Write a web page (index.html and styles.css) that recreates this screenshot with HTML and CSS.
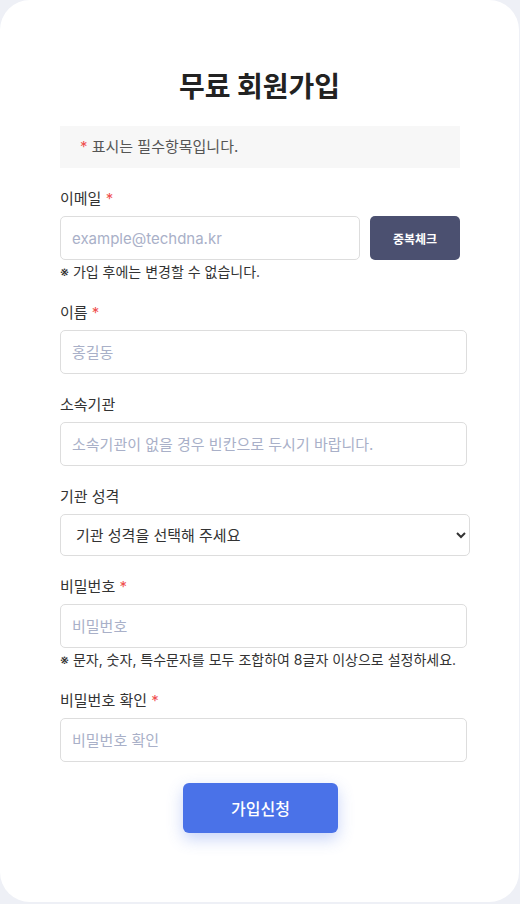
FILE: index.html
```html
<!DOCTYPE html>
<html lang="ko">
<head>
<meta charset="utf-8">
<title>무료 회원가입</title>
<link rel="stylesheet" href="styles.css">
</head>
<body>
<div class="card">
  <h1 class="title">무료 회원가입</h1>
  <div class="notice"><span class="req">*</span> 표시는 필수항목입니다.</div>

  <div class="field">
    <label class="label">이메일 <span class="req">*</span></label>
    <div class="row">
      <input class="input input-email" type="text" placeholder="example@techdna.kr">
      <button class="btn-check" type="button">중복체크</button>
    </div>
    <p class="hint">※ 가입 후에는 변경할 수 없습니다.</p>
  </div>

  <div class="field">
    <label class="label">이름 <span class="req">*</span></label>
    <input class="input" type="text" placeholder="홍길동">
  </div>

  <div class="field">
    <label class="label">소속기관</label>
    <input class="input" type="text" placeholder="소속기관이 없을 경우 빈칸으로 두시기 바랍니다.">
  </div>

  <div class="field">
    <label class="label">기관 성격</label>
    <select class="select">
      <option>기관 성격을 선택해 주세요</option>
    </select>
  </div>

  <div class="field">
    <label class="label">비밀번호 <span class="req">*</span></label>
    <input class="input" type="password" placeholder="비밀번호">
    <p class="hint">※ 문자, 숫자, 특수문자를 모두 조합하여 8글자 이상으로 설정하세요.</p>
  </div>

  <div class="field">
    <label class="label">비밀번호 확인 <span class="req">*</span></label>
    <input class="input" type="password" placeholder="비밀번호 확인">
  </div>

  <div class="submit-wrap">
    <button class="btn-submit" type="button">가입신청</button>
  </div>
</div>
</body>
</html>
```

FILE: styles.css
```css
* { box-sizing: border-box; }
html, body { margin: 0; padding: 0; }
body {
  background: #eef0f6;
  font-family: "Inter", "Noto Sans CJK KR", sans-serif;
  color: #222;
}
.card {
  width: 519px;
  height: 902px;
  background: #fff;
  border-radius: 30px;
  padding: 68px 60px 0 60px;
}
.title {
  margin: 0 0 20px 0;
  text-align: center;
  font-size: 28px;
  font-weight: 700;
  line-height: 38px;
  color: #222;
}
.notice {
  width: 400px;
  height: 42px;
  background: #f7f7f7;
  padding: 0 20px;
  font-size: 15px;
  line-height: 42px;
  color: #555;
  margin-bottom: 20px;
}
.req { color: #f0504f; }
.field { margin-bottom: 20px; }
.label {
  display: block;
  font-size: 15px;
  line-height: 22px;
  color: #333;
  margin-bottom: 6px;
}
.row {
  display: flex;
  gap: 10px;
  width: 400px;
}
.input {
  display: block;
  width: 407px;
  height: 44px;
  border: 1px solid #ddd;
  border-radius: 5px;
  padding: 0 11px;
  font-family: inherit;
  font-size: 15px;
  color: #222;
  background: #fff;
  outline: none;
}
.input::placeholder { color: #a9b0c8; }
.input-email { width: 300px; }
.btn-check {
  width: 90px;
  height: 44px;
  border: none;
  border-radius: 5px;
  background: #4b5070;
  color: #fff;
  font-family: inherit;
  font-size: 12px;
  font-weight: 700;
}
.hint {
  margin: 2px 0 0 0;
  font-size: 14px;
  line-height: 20px;
  color: #333;
}
.select {
  display: block;
  width: 410px;
  height: 42px;
  border: 1px solid #ddd;
  border-radius: 5px;
  padding: 0 11px;
  font-family: inherit;
  font-size: 15px;
  color: #333;
  background: #fff;
}
.submit-wrap {
  display: flex;
  justify-content: center;
  padding-top: 1px;
  margin-left: 2px;
}
.btn-submit {
  width: 155px;
  height: 50px;
  border: none;
  border-radius: 6px;
  background: #4a72e8;
  color: #fff;
  font-family: inherit;
  font-size: 16px;
  font-weight: 500;
  box-shadow: 0 6px 16px rgba(74, 114, 232, 0.3);
}
```
